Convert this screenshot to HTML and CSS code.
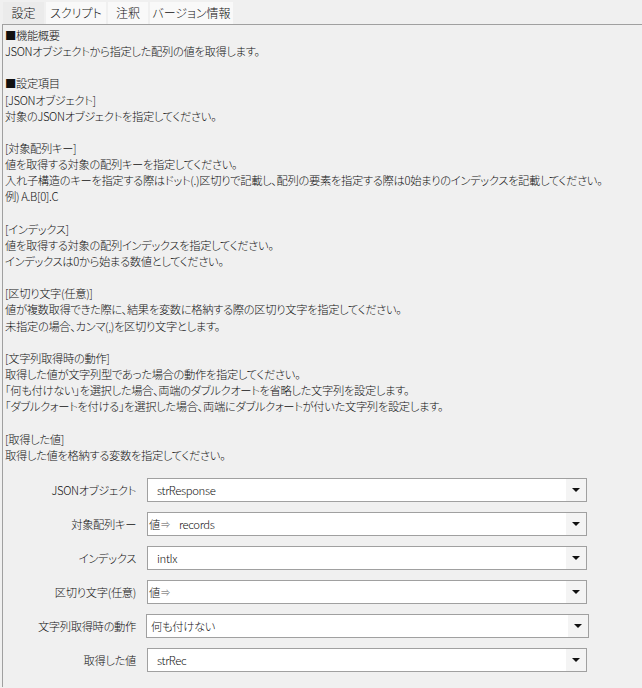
FILE: index.html
```html
<!DOCTYPE html>
<html lang="ja">
<head>
<meta charset="utf-8">
<link rel="stylesheet" href="styles.css">
</head>
<body>
<div class="tabs">
  <div class="tab tab-active t1">設定</div>
  <div class="tab t2">スクリプト</div>
  <div class="tab t3">注釈</div>
  <div class="tab t4">バージョン情報</div>
</div>
<div class="panel">
  <div class="desc">
    <p>■機能概要</p>
    <p>JSONオブジェクトから指定した配列の値を取得します。</p>
    <p class="blank"></p>
    <p>■設定項目</p>
    <p>[JSONオブジェクト]</p>
    <p>対象のJSONオブジェクトを指定してください。</p>
    <p class="blank"></p>
    <p>[対象配列キー]</p>
    <p>値を取得する対象の配列キーを指定してください。</p>
    <p>入れ子構造のキーを指定する際はドット(.)区切りで記載し、配列の要素を指定する際は0始まりのインデックスを記載してください。</p>
    <p>例) A.B[0].C</p>
    <p class="blank"></p>
    <p>[インデックス]</p>
    <p>値を取得する対象の配列インデックスを指定してください。</p>
    <p>インデックスは0から始まる数値としてください。</p>
    <p class="blank"></p>
    <p>[区切り文字(任意)]</p>
    <p>値が複数取得できた際に、結果を変数に格納する際の区切り文字を指定してください。</p>
    <p>未指定の場合、カンマ(,)を区切り文字とします。</p>
    <p class="blank"></p>
    <p>[文字列取得時の動作]</p>
    <p>取得した値が文字列型であった場合の動作を指定してください。</p>
    <p>「何も付けない」を選択した場合、両端のダブルクオートを省略した文字列を設定します。</p>
    <p>「ダブルクォートを付ける」を選択した場合、両端にダブルクォートが付いた文字列を設定します。</p>
    <p class="blank"></p>
    <p>[取得した値]</p>
    <p>取得した値を格納する変数を指定してください。</p>
  </div>
  <div class="form">
    <div class="row">
      <div class="label">JSONオブジェクト</div>
      <div class="combo"><span class="value">strResponse</span><span class="btn"><span class="arrow"></span></span></div>
    </div>
    <div class="row">
      <div class="label">対象配列キー</div>
      <div class="combo"><span class="prefix">値<span class="imp">⇒</span></span><span class="value value-after">records</span><span class="btn"><span class="arrow"></span></span></div>
    </div>
    <div class="row">
      <div class="label">インデックス</div>
      <div class="combo"><span class="value">intIx</span><span class="btn"><span class="arrow"></span></span></div>
    </div>
    <div class="row">
      <div class="label">区切り文字(任意)</div>
      <div class="combo"><span class="prefix">値<span class="imp">⇒</span></span><span class="value value-after"></span><span class="btn"><span class="arrow"></span></span></div>
    </div>
    <div class="row">
      <div class="label">文字列取得時の動作</div>
      <div class="combo combo-list"><span class="value value-list">何も付けない</span><span class="btn"><span class="arrow"></span></span></div>
    </div>
    <div class="row">
      <div class="label">取得した値</div>
      <div class="combo"><span class="value">strRec</span><span class="btn"><span class="arrow"></span></span></div>
    </div>
  </div>
</div>
</body>
</html>
```

FILE: styles.css
```css
html, body {
  margin: 0;
  padding: 0;
  background: #f0f0f0;
  height: 100%;
  overflow: hidden;
}
body {
  font-family: "Noto Sans CJK JP", "Noto Sans", sans-serif;
  font-size: 11.3px;
  font-weight: 300;
  letter-spacing: -0.35px;
  color: #111;
  font-feature-settings: "palt";
}
.tabs {
  display: flex;
  gap: 2px;
  padding: 2px 0 0 3px;
  height: 22px;
  box-sizing: content-box;
}
.tab {
  height: 22px;
  line-height: 22px;
  text-align: center;
  white-space: nowrap;
  background: #f9f9f9;
  font-size: 12px;
  letter-spacing: 0;
}
.tab-active {
  background: #ebebeb;
}
.t1 { width: 41px; }
.t2 { width: 60px; }
.t3 { width: 40px; }
.t4 { width: 83px; }
.panel {
  margin-left: 2px;
  border-top: 1px solid #a0a0a0;
  border-left: 1px solid #a0a0a0;
  height: calc(100vh - 25px);
  box-sizing: border-box;
}
.desc {
  padding: 2px 0 0 2px;
}
.desc p {
  margin: 0;
  height: 16.15px;
  line-height: 16.15px;
  white-space: nowrap;
}
.form {
  margin-top: 15px;
  display: flex;
  flex-direction: column;
  gap: 10px;
}
.row {
  display: flex;
  align-items: center;
  height: 24px;
}
.label {
  width: 133px;
  text-align: right;
  margin-right: 11px;
  white-space: nowrap;
}
.combo {
  width: 438px;
  height: 22px;
  border: 1px solid #a0a0a0;
  background: #fff;
  display: flex;
  align-items: center;
}
.combo-list {
  width: 441px;
  margin-left: -1px;
}
.value {
  flex: 1;
  padding-left: 9px;
  white-space: nowrap;
}
.value-after {
  padding-left: 0;
}
.value-list {
  padding-left: 4px;
}
.prefix {
  padding-left: 1px;
  width: 30px;
  white-space: nowrap;
}
.imp {
  font-size: 9px;
  color: #555;
  margin-left: 1px;
  position: relative;
  top: -1px;
}
.btn {
  width: 20px;
  height: 22px;
  background: #f4f4f4;
  display: flex;
  align-items: center;
  justify-content: center;
}
.arrow {
  width: 0;
  height: 0;
  border-left: 4px solid transparent;
  border-right: 4px solid transparent;
  border-top: 4px solid #111;
}
```
